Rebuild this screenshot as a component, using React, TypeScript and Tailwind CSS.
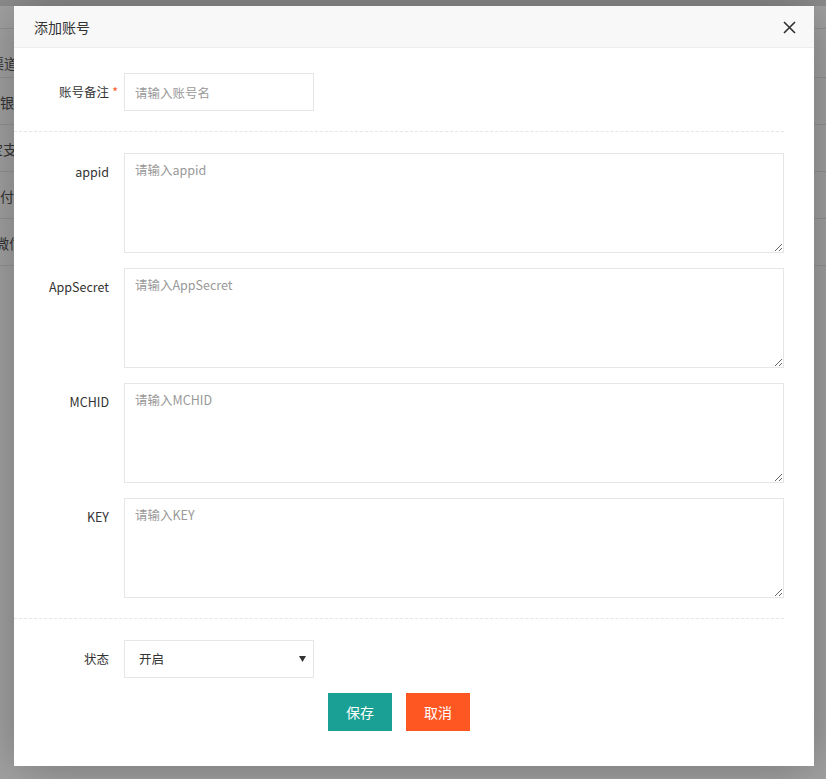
import type { ReactNode } from 'react'

const font = { fontFamily: '"Noto Sans CJK SC", "Noto Sans", sans-serif' }

const bgRows = [
  { text: '渠道', offset: 'ml-[-10px] pt-[24px]' },
  { text: '银行', offset: 'ml-[0px] pt-[14px]' },
  { text: '宝支付', offset: 'ml-[-11px] pt-[14px]' },
  { text: '支付宝', offset: 'ml-[-14px] pt-[14px]' },
  { text: '微信', offset: 'ml-[-5px] pt-[14px]' },
]

function Label({ children, required }: { children: ReactNode; required?: boolean }) {
  return (
    <label className="relative w-[110px] shrink-0 px-[15px] py-[9px] text-right text-[12.5px] leading-[20px] text-[#333]">
      {children}
      {required && <span className="absolute right-[6px] top-[9px] text-[#ff5722]">*</span>}
    </label>
  )
}

function AreaRow({ label, placeholder }: { label: string; placeholder: string }) {
  return (
    <div className="flex">
      <Label>{label}</Label>
      <textarea
        placeholder={placeholder}
        className="h-[100px] w-[660px] resize-y border border-[#e6e6e6] bg-white px-[10px] pt-[6px] text-[12.5px] leading-[20px] text-[#333] outline-none placeholder:text-[#999]"
      />
    </div>
  )
}

export default function App() {
  return (
    <div className="relative h-[779px] w-[826px] overflow-hidden bg-white text-[#333]" style={font}>
      {/* page behind the dialog */}
      <div className="h-[6px] bg-[#ddd]" />
      <div className="h-[23px] border-b border-[#e6e6e6]" />
      {bgRows.map((r, i) => (
        <div key={i} className={`border-b border-[#e6e6e6] ${i === 0 ? 'h-[49px]' : 'h-[47px]'}`}>
          <div className={`${r.offset} whitespace-nowrap text-[14px] leading-[20px] text-[#555]`}>{r.text}</div>
        </div>
      ))}

      {/* shade */}
      <div className="absolute inset-0 bg-black/[0.36]" />

      {/* dialog */}
      <div className="absolute left-[14px] top-[6px] w-[800px] bg-white shadow-[1px_1px_50px_rgba(0,0,0,0.3)]">
        <div className="relative h-[42px] border-b border-[#eee] bg-[#f8f8f8] pl-[20px] pr-[80px] text-[14px] leading-[42px] text-[#333]">
          添加账号
          <button className="absolute right-[18px] top-[15px] flex h-[13px] w-[13px] items-center justify-center">
            <svg width="13" height="13" viewBox="0 0 13 13">
              <path d="M1 1L12 12M12 1L1 12" stroke="#2f2f2f" strokeWidth="1.6" fill="none" />
            </svg>
          </button>
        </div>

        <div className="pb-[35px] pt-[25px]">
          <div className="flex">
            <Label required>账号备注</Label>
            <input
              placeholder="请输入账号名"
              className="h-[38px] w-[190px] border border-[#e6e6e6] px-[10px] text-[12.5px] text-[#333] outline-none placeholder:text-[#999]"
            />
          </div>

          <div className="mr-[30px] mt-[20px] border-t border-dashed border-[#e6e6e6]" />

          <div className="mt-[21px] flex flex-col gap-[15px]">
            <AreaRow label="appid" placeholder="请输入appid" />
            <AreaRow label="AppSecret" placeholder="请输入AppSecret" />
            <AreaRow label="MCHID" placeholder="请输入MCHID" />
            <AreaRow label="KEY" placeholder="请输入KEY" />
          </div>

          <div className="mr-[30px] mt-[20px] border-t border-dashed border-[#e6e6e6]" />

          <div className="mt-[21px] flex">
            <Label>状态</Label>
            <div className="flex h-[38px] w-[190px] items-center justify-between border border-[#e6e6e6] pl-[14px] pr-[7px] text-[12.5px] text-[#333]">
              <span>开启</span>
              <svg width="7" height="6" viewBox="0 0 7 6">
                <path d="M0 0H7L3.5 6Z" fill="#333" />
              </svg>
            </div>
          </div>

          <div className="mt-[15px] flex gap-[14px] pl-[314px]">
            <button className="h-[38px] w-[64px] bg-[#1aa094] text-[14px] leading-[38px] text-white">保存</button>
            <button className="h-[38px] w-[64px] bg-[#ff5722] text-[14px] leading-[38px] text-white">取消</button>
          </div>
        </div>
      </div>
    </div>
  )
}
